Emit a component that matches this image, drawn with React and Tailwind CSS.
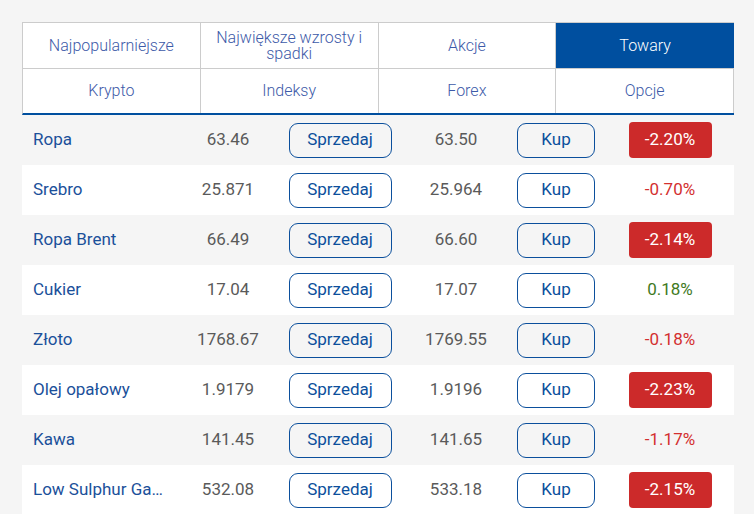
import React from "react";

const tabsTop = ["Najpopularniejsze", "Największe wzrosty i spadki", "Akcje", "Towary"];
const tabsBottom = ["Krypto", "Indeksy", "Forex", "Opcje"];

const rows = [
	{ name: "Ropa", sell: "63.46", buy: "63.50", pct: "-2.20%", big: true },
	{ name: "Srebro", sell: "25.871", buy: "25.964", pct: "-0.70%" },
	{ name: "Ropa Brent", sell: "66.49", buy: "66.60", pct: "-2.14%", big: true },
	{ name: "Cukier", sell: "17.04", buy: "17.07", pct: "0.18%" },
	{ name: "Złoto", sell: "1768.67", buy: "1769.55", pct: "-0.18%" },
	{ name: "Olej opałowy", sell: "1.9179", buy: "1.9196", pct: "-2.23%", big: true },
	{ name: "Kawa", sell: "141.45", buy: "141.65", pct: "-1.17%" },
	{ name: "Low Sulphur Gasoil", sell: "532.08", buy: "533.18", pct: "-2.15%", big: true },
];

function Change({ pct, big }) {
	if (big) {
		return (
			<span className="w-[83px] h-[36px] flex items-center justify-center rounded bg-[#cc2a2a] text-white">
				{pct}
			</span>
		);
	}
	const up = !pct.startsWith("-");
	return <span className={up ? "text-[#3f7a1e]" : "text-[#d32f2f]"}>{pct}</span>;
}

export default function App() {
	const active = "Towary";

	return (
		<div
			className="min-h-screen bg-[#f5f5f5] pt-[22px] pl-[22px]"
			style={{ fontFamily: "Roboto, 'Liberation Sans', sans-serif" }}
		>
			<div className="w-[712px]">
				{/* tabs */}
				<div className="bg-white border-l border-t border-[#cccccc] border-b-2 border-b-[#004f9f]">
					<div className="grid grid-cols-4 h-[46px] text-[16px] leading-[16px] font-light">
						{tabsTop.map((t) => (
							<div
								key={t}
								className={
									t === active
										? "flex items-center justify-center text-center px-3 bg-[#004f9f] text-white border-b border-[#cccccc]"
										: "flex items-center justify-center text-center px-3 text-[#3d5aa8] border-r border-b border-[#cccccc]"
								}
							>
								{t}
							</div>
						))}
					</div>
					<div className="grid grid-cols-4 h-[44px] text-[16px] font-light">
						{tabsBottom.map((t) => (
							<div
								key={t}
								className="flex items-center justify-center text-[#3d5aa8] border-r border-[#cccccc]"
							>
								{t}
							</div>
						))}
					</div>
				</div>

				{/* list */}
				<div className="text-[17px]">
					{rows.map((r, i) => (
						<div
							key={r.name}
							className={`grid grid-cols-[160px_92px_132px_100px_100px_128px] h-[50px] items-center ${
								i % 2 === 1 ? "bg-white" : ""
							}`}
						>
							<div className="pl-[11px] pr-[14px] text-[#1b509a] truncate">{r.name}</div>
							<div className="text-center text-[#5a5a5a]">{r.sell}</div>
							<div className="flex justify-center">
								<button
									type="button"
									className="w-[103px] h-[35px] rounded-[9px] border border-[#0b4f9c] text-[#0b4f9c] bg-transparent"
								>
									Sprzedaj
								</button>
							</div>
							<div className="text-center text-[#5a5a5a]">{r.buy}</div>
							<div className="flex justify-center">
								<button
									type="button"
									className="w-[78px] h-[35px] rounded-[9px] border border-[#0b4f9c] text-[#0b4f9c] bg-transparent"
								>
									Kup
								</button>
							</div>
							<div className="flex justify-center">
								<Change pct={r.pct} big={r.big} />
							</div>
						</div>
					))}
				</div>
			</div>
		</div>
	);
}
